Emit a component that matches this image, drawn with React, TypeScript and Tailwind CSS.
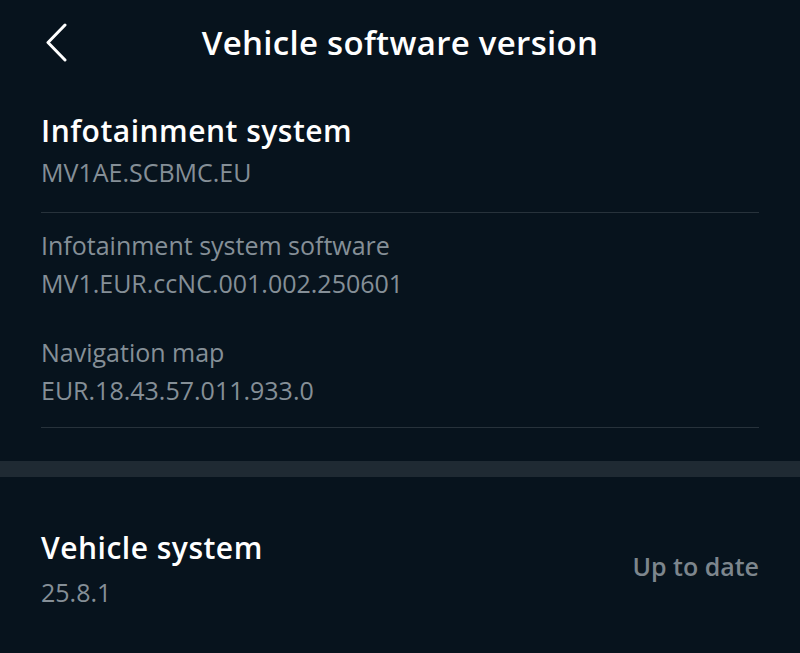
export default function App() {
  return (
    <div className="min-h-screen w-full bg-[#07131d] font-['Open_Sans',sans-serif] text-white">
      <Header />

      <section className="px-[41px] pt-[25px]">
        <h2 className="text-[30px] font-semibold leading-[40px] tracking-[0.5px]">Infotainment system</h2>
        <div className="mt-[3px] text-[25px] leading-[36px] text-[#858f97]">MV1AE.SCBMC.EU</div>
        <div className="mt-[22px] h-px bg-[#27323b]" />

        <div className="mt-[14px]">
          <Field label="Infotainment system software" value="MV1.EUR.ccNC.001.002.250601" />
          <div className="mt-[33px]">
            <Field label="Navigation map" value="EUR.18.43.57.011.933.0" />
          </div>
        </div>
        <div className="mt-[19px] h-px bg-[#27323b]" />
      </section>

      <div className="mt-[33px] h-4 bg-[#1f2a33]" />

      <section className="flex items-center justify-between px-[41px] pt-[51px]">
        <div>
          <h2 className="text-[30px] font-semibold leading-[40px] tracking-[0.5px]">Vehicle system</h2>
          <div className="mt-[6px] text-[25px] leading-[36px] text-[#858f97]">25.8.1</div>
        </div>
        <div className="-mt-[6px] text-[25px] font-semibold leading-[36px] text-[#7d868d]">Up to date</div>
      </section>
    </div>
  );
}

function Header() {
  return (
    <header className="grid h-[86px] grid-cols-[90px_1fr_90px] items-center">
      <button className="flex h-full items-center pl-[44px]" aria-label="Back">
        <svg width="26" height="40" viewBox="0 0 26 40" fill="none">
          <path d="M21 2 L4 19.5 L21 37" stroke="white" strokeWidth="3" strokeLinecap="round" strokeLinejoin="round" />
        </svg>
      </button>
      <h1 className="text-center text-[33px] font-semibold leading-[40px] tracking-[0.3px]">Vehicle software version</h1>
      <div />
    </header>
  );
}

function Field({ label, value }: { label: string; value: string }) {
  return (
    <div className="text-[25px] leading-[36px] text-[#858f97]">
      <div>{label}</div>
      <div className="mt-[2px]">{value}</div>
    </div>
  );
}
